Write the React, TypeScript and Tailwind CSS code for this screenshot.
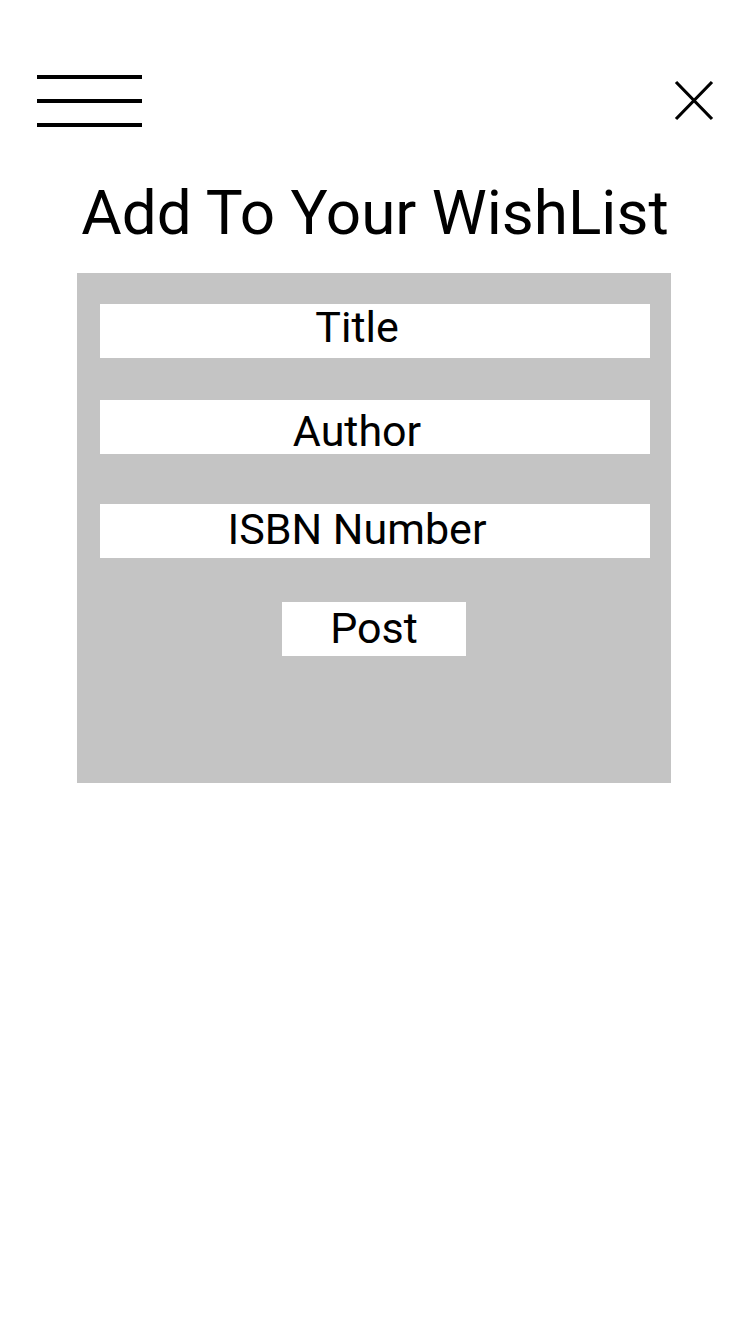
/** 위시리스트 추가 화면: 상단 메뉴/닫기, 제목, 회색 입력 패널 */
function Field({ label, pad }: { label: string; pad: string }) {
  return (
    <div className={`h-[54px] w-[550px] bg-white pr-[36px] text-center ${pad}`}>
      <span className="block text-[43px] leading-[43px] text-black">{label}</span>
    </div>
  )
}

export default function App() {
  return (
    <div className="h-[1334px] w-[750px] bg-white font-['Roboto','Liberation_Sans',sans-serif]">
      {/* 상단 바 */}
      <header className="flex items-start justify-between pl-[37px] pr-[36px] pt-[75px]">
        <div className="flex flex-col gap-[20px]">
          <div className="h-[4px] w-[105px] bg-black" />
          <div className="h-[4px] w-[105px] bg-black" />
          <div className="h-[4px] w-[105px] bg-black" />
        </div>
        <svg width="40" height="41" viewBox="0 0 40 41" className="mt-[5px]">
          <path d="M2 2 L38 39 M38 2 L2 39" stroke="black" strokeWidth="3.2" fill="none" />
        </svg>
      </header>

      <h1 className="mt-[55px] text-center text-[62px] font-normal leading-[62px] text-black">
        Add To Your WishList
      </h1>

      {/* 입력 패널 */}
      <section className="mx-[77px] mt-[29px] h-[510px] w-[594px] bg-[#c4c4c4] pl-[23px] pt-[31px]">
        <Field label="Title" pad="pt-[1.5px]" />
        <div className="mt-[42px]">
          <Field label="Author" pad="pt-[10px]" />
        </div>
        <div className="mt-[50px]">
          <Field label="ISBN Number" pad="pt-[4px]" />
        </div>
        <button className="ml-[182px] mt-[44px] flex h-[54px] w-[184px] items-start justify-center bg-white pt-[5px]">
          <span className="block text-[43px] leading-[43px] text-black">Post</span>
        </button>
      </section>
    </div>
  )
}
